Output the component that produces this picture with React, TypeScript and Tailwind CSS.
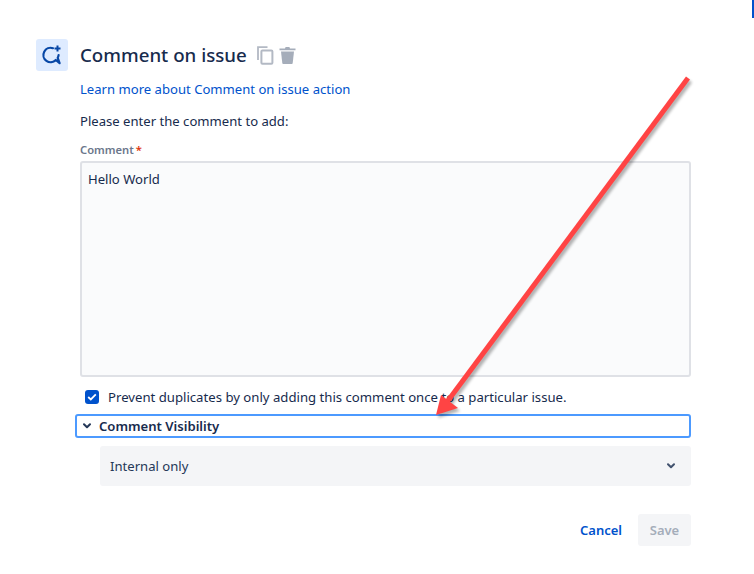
import React from 'react';

const CommentIcon = () => (
  <svg width="22" height="22" viewBox="0 0 22 22" fill="none">
    <path d="M12 4.2A7.2 7.2 0 1 0 14.8 16L18.6 19.2L16.7 13.8A7.2 7.2 0 0 0 17.6 11" stroke="#0747A6" strokeWidth="2.2" strokeLinecap="round" strokeLinejoin="round" />
    <path d="M16.5 1.5v6M13.5 4.5h6" stroke="#0747A6" strokeWidth="2" />
  </svg>
);

const CopyIcon = () => (
  <svg width="17" height="19" viewBox="0 0 17 19" fill="none">
    <path d="M1 14V1.2H10.5" stroke="#B3B9C4" strokeWidth="1.8" />
    <rect x="4.4" y="4.4" width="11" height="13.4" rx="1" stroke="#B3B9C4" strokeWidth="2" />
  </svg>
);

const TrashIcon = () => (
  <svg width="17" height="18" viewBox="0 0 17 18" fill="none">
    <path d="M0.5 2.5H6L6.6 1H10.4L11 2.5H16.5V4.2H0.5Z" fill="#A5ADBA" />
    <path d="M2 5.5H15L13.7 17.2C13.6 17.7 13.3 18 12.8 18H4.2C3.7 18 3.4 17.7 3.3 17.2Z" fill="#A5ADBA" />
  </svg>
);

const Chevron = ({ color }: { color: string }) => (
  <svg width="8" height="6" viewBox="0 0 8 6" fill="none">
    <path d="M1 1.2L4 4.2L7 1.2" stroke={color} strokeWidth="2" strokeLinecap="round" strokeLinejoin="round" />
  </svg>
);

export default function App() {
  return (
    <div className="relative h-[574px] w-[754px] overflow-hidden bg-white font-['Noto_Sans','Open_Sans',sans-serif] text-[#172B4D]">
      <div className="absolute right-0 top-0 h-[18px] w-[2px] bg-[#0052CC]" />

      <div className="flex gap-3 pl-9 pr-[63px] pt-[39px]">
        <div className="flex h-8 w-8 shrink-0 items-center justify-center rounded-[3px] bg-[#DEEBFF]">
          <CommentIcon />
        </div>
        <div className="min-w-0 flex-1">
          <div className="flex h-8 items-center">
            <h1 className="text-[18.7px] font-medium leading-8">Comment on issue</h1>
            <div className="ml-[10px] flex items-center gap-[5px]">
              <CopyIcon />
              <TrashIcon />
            </div>
          </div>

          <a className="mt-[8px] block text-[13.1px] leading-5 text-[#0052CC]">Learn more about Comment on issue action</a>
          <p className="mt-3 text-[13.1px] leading-5">Please enter the comment to add:</p>

          <label className="mt-[11px] block text-[11.2px] font-semibold leading-4 text-[#6B778C]">
            Comment<span className="ml-[2px] text-[#DE350B]">*</span>
          </label>
          <div className="mt-[3px] h-[216px] rounded-[3px] border-2 border-[#DFE1E6] bg-[#FAFBFC] px-[6px] py-[6px] text-[13.1px] leading-5">
            Hello World
          </div>

          <div className="ml-[5px] mt-[10px] flex h-5 items-center gap-[9px] text-[13.17px]">
            <span className="flex h-[14px] w-[14px] items-center justify-center rounded-[3px] bg-[#0052CC]">
              <svg width="10" height="8" viewBox="0 0 10 8" fill="none">
                <path d="M1.2 4L3.8 6.4L8.8 1.4" stroke="white" strokeWidth="1.8" />
              </svg>
            </span>
            <span className="pt-[2px]">Prevent duplicates by only adding this comment once to a particular issue.</span>
          </div>

          <div className="-ml-[5px] mt-[7px] flex h-[24px] items-center gap-[8px] rounded-[3px] border-2 border-[#4C9AFF] pl-[6px] text-[13.1px] font-semibold">
            <Chevron color="#253858" />
            <span className="pt-[2px]">Comment Visibility</span>
          </div>

          <div className="ml-5 mt-2 flex h-10 items-center justify-between rounded-[3px] bg-[#F4F5F7] pl-[10px] pr-[16px] text-[13.1px] text-[#253858]">
            <span className="pt-[2px]">Internal only</span>
            <Chevron color="#42526E" />
          </div>

          <div className="mt-[28px] flex items-center justify-end gap-[16px]">
            <span className="pt-[2px] text-[13px] font-semibold text-[#0052CC]">Cancel</span>
            <span className="flex h-8 w-[53px] items-center justify-center rounded-[3px] bg-[#F4F5F7] pt-[2px] text-[13px] font-semibold text-[#A5ADBA]">
              Save
            </span>
          </div>
        </div>
      </div>

      <svg className="absolute left-0 top-0" width="754" height="574" viewBox="0 0 754 574" fill="none">
        <g opacity="0.3" transform="translate(2 3)" style={{ filter: 'blur(1.5px)' }}>
          <path d="M688 78L447 402" stroke="#000" strokeWidth="5" />
          <path d="M436 415L441 395L458 408Z" fill="#000" />
        </g>
        <path d="M688 78L447 402" stroke="#FF4444" strokeWidth="5" />
        <path d="M436 415L441 395L458 408Z" fill="#FF4444" />
      </svg>
    </div>
  );
}
